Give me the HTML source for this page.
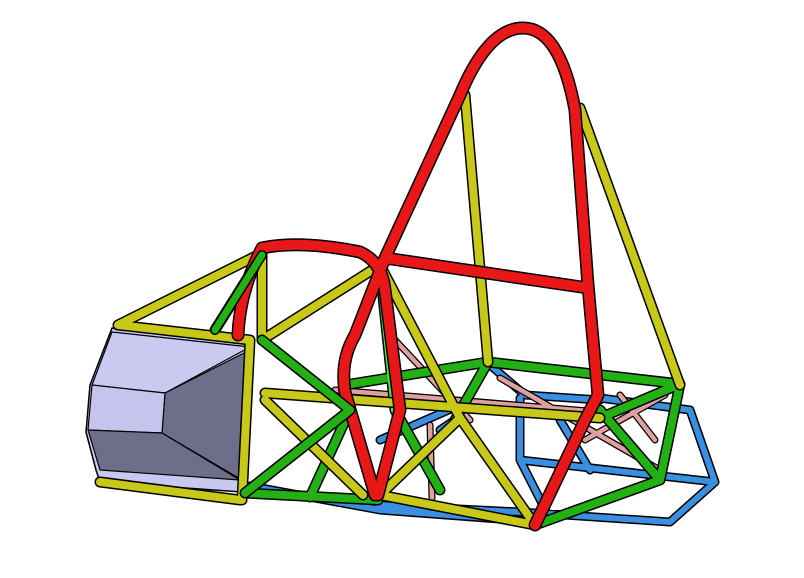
<!DOCTYPE html>
<html><head><style>html,body{margin:0;padding:0;background:#fff;width:804px;height:578px;overflow:hidden}</style></head>
<body>
<svg width="804" height="578" viewBox="0 0 804 578" xmlns="http://www.w3.org/2000/svg" fill="none" stroke-linecap="round" stroke-linejoin="round">
<g id="blue">
<path d="M250,486 L380,510 L540,522 M378,505 L520,512 L670,522 L715,482 L690,410 L600,398 M490,365 L525,395 L600,400 M520,398 L520,460 L715,482 M520,460 L548,515 M440,430 L455,420 M380,440 L460,405 M560,420 L590,470" stroke="#000" stroke-width="9"/>
<path d="M250,486 L380,510 L540,522 M378,505 L520,512 L670,522 L715,482 L690,410 L600,398 M490,365 L525,395 L600,400 M520,398 L520,460 L715,482 M520,460 L548,515 M440,430 L455,420 M380,440 L460,405 M560,420 L590,470" stroke="#3a8fe0" stroke-width="6"/>
</g>
<g id="pink">
<path d="M335,390 L600,412 M500,378 L660,470 M620,395 L655,440 M430,425 L432,498 M395,340 L470,420 M585,440 L665,395" stroke="#000" stroke-width="7"/>
<path d="M335,390 L600,412 M500,378 L660,470 M620,395 L655,440 M430,425 L432,498 M395,340 L470,420 M585,440 L665,395" stroke="#e0a0a0" stroke-width="4.5"/>
</g>
<!-- attenuator -->
<polygon points="112,328 250,342 242,492 100,482 96,470 86,432 90,385" fill="#c8c8f0" stroke="#000" stroke-width="1.5"/>
<polygon points="112,332 250,347 165,393 92,385" fill="#cacaf0" stroke="#000" stroke-width="1.2"/>
<polygon points="165,393 250,350 242,480 162,433" fill="#6e6e8a" stroke="#000" stroke-width="1.2"/>
<polygon points="92,385 165,393 162,433 88,430" fill="#c4c4ec" stroke="#000" stroke-width="1.2"/>
<polygon points="88,430 162,433 240,480 100,470" fill="#6e6e8a" stroke="#000" stroke-width="1.2"/>
<g id="greenb">
<path d="M345,385 L488,362 L680,384 M488,362 L455,420 M680,384 L660,480 L535,525 M600,410 L660,480 M600,418 L680,384 M262,340 L350,410 M350,410 L245,493 M350,410 L310,497 M245,493 L378,500 M380,268 L395,410 M395,410 L440,490 M262,255 L215,330" stroke="#000" stroke-width="11"/>
<path d="M345,385 L488,362 L680,384 M488,362 L455,420 M680,384 L660,480 L535,525 M600,410 L660,480 M600,418 L680,384 M262,340 L350,410 M350,410 L245,493 M350,410 L310,497 M245,493 L378,500 M395,410 L440,490 M262,255 L215,330" stroke="#22b014" stroke-width="8"/>
<path d="M380,268 L395,410" stroke="#44ee30" stroke-width="8"/>
</g>
<g id="yellow">
<path d="M118,325 L262,253 M262,253 L262,340 M262,340 L380,265 M380,265 L460,418 M580,108 L680,385 M465,95 L488,362 M265,393 L600,418 M265,400 L363,495 M460,418 L535,525 M460,418 L380,495 M380,495 L535,525 M118,325 L250,340 M250,340 L242,500 M100,482 L240,500" stroke="#000" stroke-width="11"/>
<path d="M118,325 L262,253 M262,253 L262,340 M262,340 L380,265 M380,265 L460,418 M580,108 L680,385 M465,95 L488,362 M265,393 L600,418 M265,400 L363,495 M460,418 L535,525 M460,418 L380,495 M380,495 L535,525 M118,325 L250,340 M250,340 L242,500 M100,482 L240,500" stroke="#c8c818" stroke-width="8"/>
</g>
<g id="red">
<path d="M535,525 L585,420 L598,395 L588,285 L575,110 Q560,28 523,28 Q488,28 460,95 L385,258 L355,335 Q340,360 345,392 L375,495 M385,258 L588,288 M238,335 Q240,290 262,248 Q300,240 360,252 Q382,262 385,290 L400,410 L378,495" stroke="#000" stroke-width="13"/>
<path d="M535,525 L585,420 L598,395 L588,285 L575,110 Q560,28 523,28 Q488,28 460,95 L385,258 L355,335 Q340,360 345,392 L375,495 M385,258 L588,288 M238,335 Q240,290 262,248 Q300,240 360,252 Q382,262 385,290 L400,410 L378,495" stroke="#e81818" stroke-width="10"/>
</g>
<path d="M350,410 L245,493 M262,340 L350,410" stroke="#000" stroke-width="11"/>
<path d="M350,410 L245,493 M262,340 L350,410" stroke="#22b014" stroke-width="8"/>
<path d="M262,255 L215,330" stroke="#000" stroke-width="10"/>
<path d="M262,255 L215,330" stroke="#22b014" stroke-width="7"/>
</svg>
</body></html>
